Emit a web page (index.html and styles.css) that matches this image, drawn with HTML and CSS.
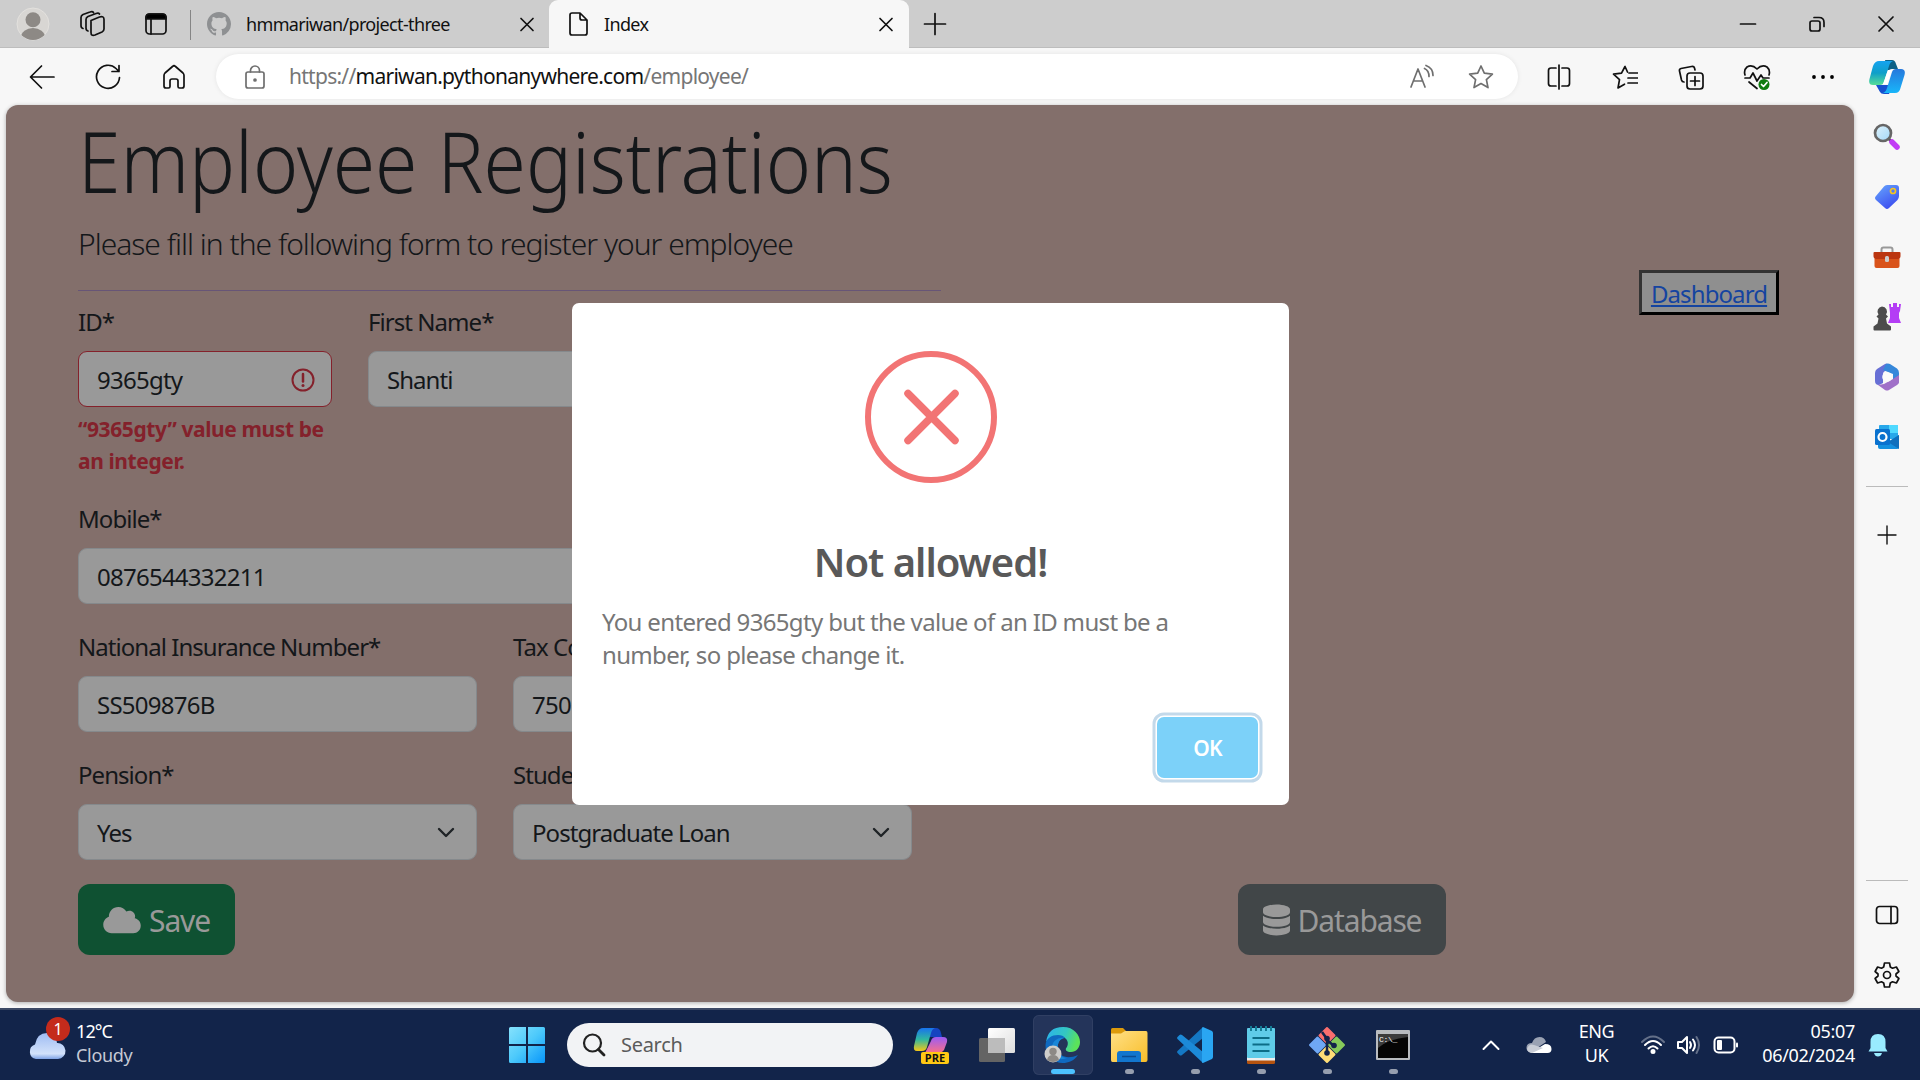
FILE: index.html
```html
<!DOCTYPE html>
<html lang="en">
<head>
<meta charset="utf-8">
<title>Index</title>
<link rel="stylesheet" href="styles.css">
</head>
<body>
<div class="desktop">

  <header class="tabstrip">
    <div class="cell avatar">
      <svg width="34" height="34" viewBox="0 0 34 34"><defs><clipPath id="av"><circle cx="17" cy="17" r="16"/></clipPath></defs><circle cx="17" cy="17" r="16" fill="#d8d6d3" stroke="#e3e1de"/><g clip-path="url(#av)" fill="#8d8985"><circle cx="17" cy="12.8" r="7.5"/><ellipse cx="17" cy="30" rx="12" ry="9"/></g></svg>
    </div>
    <div class="cell workspaces">
      <svg class="line" width="28" height="28" viewBox="0 0 28 28"><path d="M12 10.5l8.5-3.5q4.5-1.5 4.5 2.5v9.5q0 2-2 3l-7 3q-4 1.5-4-2.5z"/><path d="M9 21q-2-.5-2-3V9.500q0-2 2-3l8-3q2.5-1 3.5.5M4 18.5q-2-.5-2-3V7.500q0-2 2-3l7-2.5q2.5-1 3.5.5"/></svg>
    </div>
    <div class="cell tabmenu">
      <svg class="line" width="24" height="24" viewBox="0 0 24 24"><rect x="2" y="2" width="20" height="20" rx="3.5"/><path d="M2 7V5.500Q2 2 5.500 2h13Q22 2 22 5.500V7z" fill="#000"/><path d="M7 7v15"/></svg>
    </div>
    <i class="divider"></i>
    <div class="tab idle">
      <svg width="24" height="24" viewBox="0 0 16 16"><path fill="#8e9092" d="M8 0C3.58 0 0 3.58 0 8c0 3.54 2.29 6.53 5.47 7.59.4.07.55-.17.55-.38v-1.49c-2.01.37-2.53-.49-2.69-.94-.09-.23-.48-.94-.82-1.13-.28-.15-.68-.52-.01-.53.63-.01 1.08.58 1.23.82.72 1.21 1.87.87 2.33.66.07-.52.28-.87.51-1.07-1.78-.2-3.64-.89-3.64-3.95 0-.87.31-1.59.82-2.15-.08-.2-.36-1.02.08-2.12 0 0 .67-.21 2.2.82a7.6 7.6 0 0 1 4 0c1.53-1.04 2.2-.82 2.2-.82.44 1.1.16 1.92.08 2.12.51.56.82 1.27.82 2.15 0 3.07-1.87 3.75-3.65 3.95.29.25.54.73.54 1.48v2.2c0 .21.15.46.55.38A8 8 0 0 0 16 8c0-4.42-3.58-8-8-8z"/></svg>
      <span class="tab-title">hmmariwan/project-three</span>
      <svg class="line close" width="24" height="24" viewBox="0 0 24 24"><path d="M6 6.500l12 12M18 6.500l-12 12"/></svg>
    </div>
    <div class="tab active">
      <svg class="line" width="24" height="26" viewBox="0 0 24 26"><path d="M6 2h8l7 7v13q0 2-2 2H6q-2 0-2-2V4q0-2 2-2zM14 2v5q0 2 2 2h5"/></svg>
      <span class="tab-title">Index</span>
      <svg class="line close" width="24" height="24" viewBox="0 0 24 24"><path d="M6 6.500l12 12M18 6.500l-12 12"/></svg>
    </div>
    <div class="cell newtab"><svg class="line" width="24" height="24" viewBox="0 0 24 24"><path d="M12 1.5v21M1.500 12h21"/></svg></div>
    <div class="window-controls">
      <div class="cell"><svg class="line" width="20" height="20" viewBox="0 0 20 20"><path d="M2.500 10h15"/></svg></div>
      <div class="cell"><svg class="line" width="20" height="20" viewBox="0 0 20 20"><rect x="3" y="7" width="10" height="10" rx="2"/><path d="M7 3.500h5q5 0 5 5v4"/></svg></div>
      <div class="cell"><svg class="line" width="20" height="20" viewBox="0 0 20 20"><path d="M3 3l14 14M17 3l-14 14"/></svg></div>
    </div>
  </header>

  <div class="toolbar">
    <div class="cell"><svg class="line" width="26" height="26" viewBox="0 0 26 26"><path d="M25 13H2M12.500 2L1.500 13l11 11"/></svg></div>
    <div class="cell"><svg class="line" width="26" height="26" viewBox="0 0 26 26"><path d="M24.500 13.500A11.500 11.500 0 1 1 21 4.500l3 3M24 1.500v6h-7"/></svg></div>
    <div class="cell"><svg class="line" width="24" height="26" viewBox="0 0 24 26"><path d="M2 11.500q0-1.500 1-2.500L10.500 2.500q1.500-1.500 3 0L21 9q1 1 1 2.500V22q0 2-2 2h-2.500q-1.500 0-1.500-1.500V17q0-2-2-2h-4q-2 0-2 2v5.500q0 1.500-1.500 1.500H4q-2 0-2-2z"/></svg></div>
    <div class="address">
      <svg class="line gray" width="24" height="26" viewBox="0 0 24 26"><rect x="3" y="8" width="18" height="16" rx="2"/><path d="M7.500 8V6.500a4.500 4.500 0 0 1 9 0V8"/><circle cx="12" cy="16" r="1" fill="#6b6b6b"/></svg>
      <span class="url">https://<b>mariwan.pythonanywhere.com</b>/employee/</span>
      <svg class="line gray read" width="26" height="26" viewBox="0 0 26 26"><path d="M2 23L9 5l7 18M4.500 17h9M15.500 4.500q4.500 2 4.500 8M17 1.500q7 2.500 7 10"/></svg>
      <svg class="line gray" width="26" height="26" viewBox="0 0 26 26"><path d="M13 2l3.300 7.200 8.100.9-6 5.500 1.600 8-7-4-7 4 1.600-8-6-5.500 8.100-.9z"/></svg>
    </div>
    <div class="cell first"><svg class="line" width="26" height="26" viewBox="0 0 26 26"><path d="M10 4H5Q2.500 4 2.500 6.500v13Q2.500 22 5 22h5M16 4h5q2.500 0 2.500 2.500v13q0 2.500-2.500 2.500h-5M13 1v24"/></svg></div>
    <div class="cell"><svg class="line" width="26" height="26" viewBox="0 0 26 26"><path d="M15.500 8L13 2.500 9.500 9.200l-8 1 6 5.500-1.500 8.300 6.500-3.800M17 9h8.500M16 14h9.500M16 19h9.500"/></svg></div>
    <div class="cell"><svg class="line" width="26" height="26" viewBox="0 0 26 26"><rect x="9" y="9" width="16" height="16" rx="3"/><path d="M17 12.500v9M12.500 17h9M17 6l-.5-2q-.5-2-3-1.500L3 4.500Q1 5 1.500 7l2 9q.5 2 2.500 2"/></svg></div>
    <div class="cell"><svg class="line" width="28" height="26" viewBox="0 0 28 26"><path d="M2 11q-1.500-5 2-8Q9 0 14 5q5-5 10-2 3.500 3 2 8M2 14h5l3-5 4 8 4-6 2 3h6M6 18l8 6.500"/><circle cx="21" cy="20.500" r="5.500" fill="#107c10" stroke="none"/><path d="M18.500 20.500l2 2 3.500-4" stroke="#fff"/></svg></div>
    <div class="cell"><svg width="26" height="26" viewBox="0 0 26 26"><circle cx="4" cy="13" r="1.900"/><circle cx="13" cy="13" r="1.900"/><circle cx="22" cy="13" r="1.900"/></svg></div>
    <div class="cell copilot"><svg width="36" height="34" viewBox="0 0 36 34"><defs><linearGradient id="c1" x1="0" y1="0" x2="0" y2="1"><stop offset="0" stop-color="#16a3f0"/><stop offset=".5" stop-color="#0e9fc9"/><stop offset="1" stop-color="#56dd97"/></linearGradient><linearGradient id="c2" x1="0" y1="0" x2="0" y2="1"><stop offset="0" stop-color="#2678dc"/><stop offset="1" stop-color="#18b6fa"/></linearGradient></defs><path d="M16 0h7q3 0 4 4l2 5h-6q-3 0-4 3z" fill="#0d6187"/><path d="M7 25l4 7q1 2 4 2h5l4-9z" fill="#1550cf"/><path d="M10 1h14q-3 1-4 5l-5 16q-1 3-4 3H4q-5 0-3.500-6L4 6Q6 1 10 1z" fill="url(#c1)"/><path d="M26 33H14q3-1 4-5l5-16q1-3 4-3h5q5 0 3.500 6l-4 13q-1 5-5.500 5z" fill="url(#c2)"/><path d="M19 10h4l-5 14h-4z" fill="#fff"/></svg></div>
  </div>

  <div class="middle">
    <main class="page">
      <h1>Employee Registrations</h1>
      <p class="lead">Please fill in the following form to register your employee</p>
      <hr>
      <div class="columns">
        <form class="form">
          <div class="row names">
            <div class="field">
              <label>ID*</label>
              <div class="input invalid"><span class="digits">9365gty</span><svg width="24" height="24" viewBox="0 0 24 24"><circle cx="12" cy="12" r="10.500" fill="none" stroke="#84212b" stroke-width="2"/><path d="M12 6v7.500" stroke="#84212b" stroke-width="2.500" stroke-linecap="round"/><circle cx="12" cy="17.500" r="1.500" fill="#84212b"/></svg></div>
              <p class="error">“9365gty” value must be<br>an integer.</p>
            </div>
            <div class="field"><label>First Name*</label><div class="input">Shanti</div></div>
          </div>
          <div class="row"><div class="field wide"><label>Mobile*</label><div class="input"><span class="digits">0876544332211</span></div></div></div>
          <div class="row halves">
            <div class="field"><label>National Insurance Number*</label><div class="input"><span class="digits">SS509876B</span></div></div>
            <div class="field"><label>Tax Code*</label><div class="input"><span class="digits">750L</span></div></div>
          </div>
          <div class="row halves">
            <div class="field"><label>Pension*</label><div class="input">Yes<svg class="caret" width="18" height="18" viewBox="0 0 18 18"><path d="M2 5l7 7 7-7"/></svg></div></div>
            <div class="field"><label>Student Loan*</label><div class="input">Postgraduate Loan<svg class="caret" width="18" height="18" viewBox="0 0 18 18"><path d="M2 5l7 7 7-7"/></svg></div></div>
          </div>
        </form>
        <aside class="side"><button class="dashboard" type="button"><a href="#">Dashboard</a></button></aside>
      </div>
      <div class="actions">
        <div class="btn save"><svg width="38" height="30" viewBox="0 0 640 512"><path fill="#999" d="M0 336c0 79.500 64.500 144 144 144h368c70.700 0 128-57.300 128-128 0-61.900-44-113.600-102.400-125.400 4.100-10.700 6.400-22.400 6.400-34.600 0-53-43-96-96-96-19.700 0-38.100 6-53.300 16.200C367 64.200 315.300 32 256 32 167.600 32 96 103.600 96 192c0 2.700.1 5.400.2 8.100C40.200 219.800 0 273.200 0 336z"/></svg><span>Save</span></div>
        <div class="btn database"><svg width="27" height="32" viewBox="0 0 448 512"><path fill="#999" d="M448 80v48c0 44.200-100.300 80-224 80S0 172.200 0 128V80C0 35.800 100.300 0 224 0s224 35.800 224 80zM393.200 214.700c20.800-7.400 39.900-16.900 54.800-28.600V288c0 44.200-100.300 80-224 80S0 332.200 0 288V186.100c14.900 11.800 34 21.200 54.800 28.600C99.700 230.700 159.500 240 224 240s124.300-9.300 169.200-25.300zM0 346.100c14.900 11.800 34 21.200 54.800 28.600C99.700 390.700 159.500 400 224 400s124.300-9.300 169.200-25.300c20.800-7.400 39.900-16.900 54.800-28.600V432c0 44.200-100.300 80-224 80S0 476.200 0 432z"/></svg><span>Database</span></div>
      </div>
      <section class="modal">
        <svg class="modal-icon" width="132" height="132" viewBox="0 0 132 132"><circle cx="66" cy="66" r="63"/><path d="M43 42.500l47 47M90 42.500l-47 47"/></svg>
        <h2>Not allowed!</h2>
        <p>You entered 9365gty but the value of an ID must be a<br>number, so please change it.</p>
        <button class="ok" type="button">OK</button>
      </section>
    </main>

    <nav class="sidebar">
      <div class="cell"><svg width="28" height="28" viewBox="0 0 28 28"><defs><linearGradient id="mg" x2="1" y2="1"><stop offset="0" stop-color="#dff2fb"/><stop offset="1" stop-color="#a3d8f7"/></linearGradient></defs><path d="M16 16l4 4" stroke="#555" stroke-width="3"/><path d="M19 19l5 5" stroke="#c13cf5" stroke-width="5.500" stroke-linecap="round"/><circle cx="10" cy="10" r="8" fill="url(#mg)" stroke="#666" stroke-width="2.700"/></svg></div>
      <div class="cell"><svg width="26" height="26" viewBox="0 0 26 26"><defs><linearGradient id="tg" x2=".6" y2="1"><stop offset="0" stop-color="#67a7fd"/><stop offset="1" stop-color="#3d4ff0"/></linearGradient></defs><path d="M13 1h9q3 0 3 3v8q0 2-1.500 4L15 24q-2 2-4 0l-9-8q-2-2 0-4L10 2.500Q11 1 13 1z" fill="url(#tg)"/><circle cx="19" cy="7" r="2.500" fill="none" stroke="#f7c51e" stroke-width="1.700"/></svg></div>
      <div class="cell"><svg width="28" height="24" viewBox="0 0 28 24"><path d="M8.500 7V4.500q0-2 2-2h7q2 0 2 2V7" fill="none" stroke="#999" stroke-width="2"/><rect x="1.500" y="12" width="25" height="11" rx="2" fill="#d9531b"/><path d="M.5 8q0-1 1-1h25q1 0 1 1v3q0 3-3 3h-21q-3 0-3-3z" fill="#bb3610"/><rect x="12" y="11" width="4" height="6" rx="1.500" fill="#ccc"/></svg></div>
      <div class="cell"><svg width="28" height="28" viewBox="0 0 28 28"><path d="M16 1h2v3h2V0h4v4h2V1h2l-1 7-1 2v5l2 5H15l2-5v-5z" fill="#b43df5"/><path d="M9 3.500a5 5 0 0 1 4 8l2 2-2 2 1 5 4 3v3q0 1-1 1H1.500q-1 0-1-1v-3l4-3 1-5-2-2 2-2a5 5 0 0 1 3.500-8z" fill="#4c4c4c"/></svg></div>
      <div class="cell"><svg width="26" height="28" viewBox="0 0 26 28"><path d="M11 1L3 6Q1 7.500 1 10v8q0 4 4 4l4-2V11q0-2 2-3l7-4-4-3q-1.500-1-3 0z" fill="#676fd5"/><path d="M12 1q2-1 4 0l7 4.500Q25 7 25 10v10l-6-4v-5L9 7z" fill="#3688da"/><path d="M25 12v7q0 2-2 3l-8 5q-2 1-4 0l-7-5 6-1 9-5z" fill="#a070c8"/><circle cx="13" cy="14" r="4.800" fill="#fafafa"/></svg></div>
      <div class="cell"><svg width="26" height="26" viewBox="0 0 26 26"><rect x="5" y="1" width="19" height="14" rx="1" fill="#28a8ea"/><rect x="15" y="1" width="9" height="8" fill="#50d9ff"/><path d="M4 12l10 6 11-7v12q0 2-2 2H6q-2 0-2-2z" fill="#1490df"/><path d="M25 11v14L14 18z" fill="#0f6fbd"/><rect x="1" y="5" width="15" height="16" rx="1.500" fill="#0a72cf"/><circle cx="8.500" cy="13" r="4" fill="none" stroke="#fff" stroke-width="2.200"/></svg></div>
      <i class="rule"></i>
      <div class="cell add"><svg class="line thin" width="20" height="20" viewBox="0 0 20 20"><path d="M10 1v18M1 10h18"/></svg></div>
      <i class="rule bottom"></i>
      <div class="cell"><svg class="line" width="24" height="22" viewBox="0 0 24 22"><rect x="1.500" y="2.500" width="21" height="17" rx="3"/><path d="M16 2.500v17"/></svg></div>
      <div class="cell"><svg class="line" width="28" height="28" viewBox="0 0 28 28"><path d="M11.500 2h5l.8 4 2.200 1.200L23.400 6l2.500 4.500L23 13v2l2.900 2.500L23.400 22l-3.900-1.200-2.200 1.200-.8 4h-5l-.8-4-2.200-1.200L4.600 22l-2.500-4.500L5 15v-2l-2.900-2.500L4.600 6l3.900 1.200L10.700 6z"/><circle cx="14" cy="14" r="3.500"/></svg></div>
    </nav>
  </div>

  <footer class="taskbar">
    <div class="weather">
      <div class="weather-icon"><svg width="38" height="28" viewBox="0 0 38 28"><defs><linearGradient id="wc" x2="0" y2="1"><stop offset="0" stop-color="#9ebcf3"/><stop offset=".8" stop-color="#d3e2fa"/><stop offset="1" stop-color="#7fa3e5"/></linearGradient></defs><path d="M8 27a7.500 7.500 0 0 1-1-14.500Q9 1 19 1q9 0 10 10a8 8 0 0 1 1 16z" fill="url(#wc)"/></svg><span class="badge">1</span></div>
      <div class="weather-text"><span>12°C</span><span class="sub">Cloudy</span></div>
    </div>
    <div class="start"><svg width="36" height="36" viewBox="0 0 36 36"><defs><linearGradient id="wg" gradientUnits="userSpaceOnUse" x1="0" y1="0" x2="36" y2="36"><stop offset="0" stop-color="#86e2fd"/><stop offset=".5" stop-color="#4cc9fb"/><stop offset="1" stop-color="#0795fa"/></linearGradient></defs><path d="M0 1.500Q0 0 1.500 0H17v17H0zM19 0h15.500Q36 0 36 1.500V17H19zM0 19h17v17H1.500Q0 36 0 34.500zM19 19h17v15.500q0 1.500-1.500 1.500H19z" fill="url(#wg)"/></svg></div>
    <div class="search"><svg width="24" height="26" viewBox="0 0 24 26" fill="none" stroke="#222"><circle cx="10.500" cy="11" r="8.500" stroke-width="2.200"/><path d="M16.500 17.500l5.500 5.500" stroke-width="2.800" stroke-linecap="round"/></svg><span>Search</span></div>
    <div class="apps">
      <div class="app"><svg width="36" height="38" viewBox="0 0 36 38"><defs><linearGradient id="p1" x2="0" y2="1"><stop offset="0" stop-color="#1872ee"/><stop offset=".5" stop-color="#30b8a0"/><stop offset="1" stop-color="#f7c716"/></linearGradient><linearGradient id="p2" x2="0" y2="1"><stop offset="0" stop-color="#9b5cf5"/><stop offset="1" stop-color="#fb7185"/></linearGradient></defs><path d="M15 2h8q4 0 5 5l1 4H17z" fill="#1544c0"/><path d="M10 2h12q-3 1-4 5l-4 14q-1 4-5 4H4q-4 0-3-5L4 7q2-5 6-5z" fill="url(#p1)"/><path d="M24 27H12l6-12q1-4 5-4h7q5 0 4 5l-3 8q-2 3-7 3z" fill="url(#p2)"/><rect x="8" y="26" width="28" height="12" rx="2" fill="#ffc814"/><text x="22" y="36" text-anchor="middle" class="pre">PRE</text></svg></div>
      <div class="app"><svg width="38" height="38" viewBox="0 0 38 38"><defs><linearGradient id="tv" x2="1" y2="1"><stop offset="0" stop-color="#fff"/><stop offset="1" stop-color="#ddd"/></linearGradient></defs><rect x="1" y="12" width="26" height="24" rx="1.500" fill="#646464"/><rect x="10" y="2" width="27" height="25" rx="1.500" fill="url(#tv)"/><rect x="10" y="12" width="17" height="15" fill="#bcbcbc"/></svg></div>
      <div class="app current"><svg width="38" height="38" viewBox="0 0 38 38"><defs><linearGradient id="e1" x2="1" y2=".3"><stop offset="0" stop-color="#2ab0f0"/><stop offset=".6" stop-color="#34c7c0"/><stop offset="1" stop-color="#5be35a"/></linearGradient></defs><path d="M2 16Q4 1 19 1c11 0 17 8 17 15 0 6-4 10-9 10-4 0-7-2-4-5 3-6-2-11-8-11-5 0-10 2-13 6z" fill="url(#e1)"/><path d="M1.500 19C2 12 8 9 14 9c3 0 6 1 7 3-5 0-8 5-7 11 1 7 9 11 20 6-4 6-10 8-15 8C9 37 1 29 1.500 19z" fill="#0f69c0"/><path d="M8 24c-1-8 5-13 13-12-5 0-8 5-7 11 0 5 4 9 9 9-7 3-14 0-15-8z" fill="#1986d8"/><circle cx="9" cy="28" r="8.500" fill="#cfcdca"/><circle cx="9" cy="25.500" r="3.700" fill="#8d8985"/><path d="M3 34q1-5 6-5t6 5q-6 4-12 0z" fill="#8d8985"/></svg></div>
      <div class="app running"><svg width="38" height="36" viewBox="0 0 38 36"><defs><linearGradient id="fg" x2="1" y2="1"><stop offset="0" stop-color="#ffe086"/><stop offset="1" stop-color="#f8bd29"/></linearGradient></defs><path d="M1 9V2.500Q1 1 2.500 1H13l4 4v5z" fill="#dc9a0c"/><path d="M1 6.500h10L15 4h21q1.500 0 1.500 2v27q0 2-2 2h-33Q1 35 1 33z" fill="url(#fg)"/><path d="M7 35V27q0-3 3-3h18q3 0 3 3v8z" fill="#1276ce"/><path d="M12 29.500h14" stroke="#0b4c92" stroke-width="1.500"/></svg></div>
      <div class="app running"><svg width="38" height="38" viewBox="0 0 38 38"><path d="M27 1L1.500 25q-1 1 0 2l2 2q1 1 2.500 0L27 12z" fill="#1478c4"/><path d="M27 37L1.500 13q-1-1 0-2l2-2q1-1 2.500 0L27 26z" fill="#1c8ad8"/><path d="M27 1l9 4q1 1 1 2v24q0 1-1 2l-9 4q-1 0-1-1V2z" fill="#2aa6f2"/></svg></div>
      <div class="app running"><svg width="30" height="38" viewBox="0 0 30 38"><rect x="1" y="31" width="28" height="7" rx="1.500" fill="#b5530f"/><rect x="1" y="29" width="28" height="5.500" fill="#eee"/><rect x="1" y="2" width="28" height="30" rx="1" fill="#5fcbe8"/><path d="M5 0v5M10 0v5M15 0v5M20 0v5M25 0v5" stroke="#147a94" stroke-width="2"/><path d="M6.500 12h17M6.500 18.500h17M6.500 25h17" stroke="#0c6c86" stroke-width="2.200"/></svg></div>
      <div class="app running"><svg width="38" height="38" viewBox="0 0 38 38"><g stroke-width="2" stroke-linejoin="round"><path d="M19 2l7.500 7.500L19 17l-7.500-7.500z" fill="#fa6e6e" stroke="#fa6e6e"/><path d="M28.500 11.500L36 19l-7.500 7.500L21 19z" fill="#86c95a" stroke="#86c95a"/><path d="M9.500 11.500L17 19l-7.500 7.500L2 19z" fill="#6fa8f5" stroke="#6fa8f5"/><path d="M19 21l7.500 7.500L19 36l-7.500-7.500z" fill="#ffdd77" stroke="#ffdd77"/></g><path d="M14 6l5 7v15M19 14l7 6" stroke="#13234a" stroke-width="2.500" fill="none"/><g fill="#13234a"><circle cx="19" cy="12.500" r="2.800"/><circle cx="19" cy="27" r="2.800"/><circle cx="26" cy="19.500" r="2.800"/></g></svg></div>
      <div class="app running"><svg width="34" height="30" viewBox="0 0 34 30"><rect width="34" height="30" rx="1" fill="#b9bcc0"/><rect x="2" y="4" width="30" height="24" fill="#050505"/><path d="M2 4h30v3Q12 9 2 18z" fill="#3c3c3c"/><text x="3" y="12" class="prompt">C:\_</text></svg></div>
    </div>
    <div class="tray">
      <svg class="wline chev" width="20" height="14" viewBox="0 0 20 14"><path d="M2.500 11L10 3.500l7.500 7.500"/></svg>
      <svg class="cloud" width="26" height="18" viewBox="0 0 26 18"><path d="M5 16q-5 0-4.500-5Q1 7 6 7q2-6 7.500-6 5 0 6.500 5z" fill="#9aa2b3"/><path d="M4 17l15-9q6.500 0 6.500 5 0 4-4 4z" fill="#fff"/><path d="M1 13q2-6 7-4l9 3-11 5q-4 0-5-4z" fill="#c9cdd6"/></svg>
      <div class="lang"><span>ENG</span><span>UK</span></div>
      <svg class="wline wifi" width="24" height="20" viewBox="0 0 24 20"><path d="M1 7q11-11 22 0" opacity=".35"/><path d="M4 10q8-8 16 0M7.500 13.500q4.500-4.500 9 0"/><circle cx="12" cy="16.500" r="1.500" fill="#fff"/></svg>
      <svg class="wline vol" width="24" height="22" viewBox="0 0 24 22"><path d="M1 8v6h4l5 5V3L5 8zM13 8q2 3 0 6M16 5.500q4 5.500 0 11"/><path d="M19.500 3q5 8 0 16" opacity=".35"/></svg>
      <svg class="wline" width="26" height="18" viewBox="0 0 26 18"><rect x="1.500" y="1.500" width="20" height="15" rx="4"/><rect x="4" y="4" width="5" height="10" rx="1" fill="#fff" stroke="none"/><path d="M24 7.500v3"/></svg>
      <div class="clock"><span>05:07</span><span>06/02/2024</span></div>
      <svg class="bell" width="20" height="24" viewBox="0 0 20 24"><path d="M10 1q7.500 0 7.500 8v6l2 3.500H.5l2-3.500V9Q2.500 1 10 1zM6 20h8q-1 3.500-4 3.500T6 20z" fill="#99ebff"/></svg>
    </div>
  </footer>
</div>
</body>
</html>
```
FILE: styles.css
```css
* { box-sizing: border-box; }
body { margin: 0; width: 1920px; height: 1080px; overflow: hidden; font-family: "Noto Sans", "Open Sans", sans-serif; color: #14171a; }
h1, h2, p { margin: 0; font-weight: 400; }
svg { display: block; flex: none; }
.desktop { display: flex; flex-direction: column; width: 1920px; height: 1080px; background: #f7f7f7; }
.cell { display: flex; align-items: center; justify-content: center; flex: none; }
.line { fill: none; stroke: #111; stroke-width: 1.7; stroke-linejoin: round; stroke-linecap: round; }
.thin { stroke-width: 1.4; }
.gray { stroke: #6f6f6f; }

.tabstrip { display: flex; height: 48px; background: #cdcdcd; box-shadow: inset 0 -1px 0 #bdbdbd; }
.avatar { width: 60px; margin-left: 3px; }
.workspaces { width: 60px; }
.tabmenu { width: 66px; }
.divider { width: 1px; height: 30px; margin: 10px 1px 0; background: #858585; }
.tab { display: flex; align-items: center; height: 48px; }
.idle { width: 357px; padding: 0 10px 0 15px; gap: 15px; }
.active { width: 360px; padding: 0 11px 0 17px; gap: 14px; background: #f7f7f7; border-radius: 9px 9px 0 0; }
.tab-title { font-size: 18px; letter-spacing: -0.65px; color: #111; }
.close { margin-left: auto; }
.newtab { width: 52px; }
.window-controls { display: flex; margin-left: auto; }
.window-controls .cell { width: 69px; }

.toolbar { display: flex; height: 57px; padding: 0 0 0 9px; }
.toolbar .cell { width: 66px; height: 57px; }
.address { display: flex; align-items: center; width: 1302px; height: 45px; margin: 6px 0 0 9px; padding: 0 24px 0 27px; background: #fff; border-radius: 23px; box-shadow: 0 0 5px rgba(0, 0, 0, .08); flex: none; }
.url { margin: -1px 0 0 22px; font-size: 21px; letter-spacing: -0.73px; color: #767676; }
.url b { font-weight: 400; color: #111; }
.read { margin: 0 33px 0 auto; }
.toolbar .first { margin-left: 8px; }
.toolbar .copilot { margin-left: -2px; }

.middle { display: flex; height: 903px; }
.page { position: relative; width: 1848px; height: 897px; margin-left: 6px; padding: 5px 0 0 72px; border-radius: 12px; background: #836f6b; box-shadow: 0 1px 4px rgba(0, 0, 0, .3); }
h1 { height: 111px; font-size: 84px; line-height: 101px; font-weight: 300; white-space: nowrap; transform: scaleX(.914); transform-origin: 0 0; }
.lead { height: 69px; font-size: 30px; line-height: 45px; font-weight: 300; letter-spacing: -1px; white-space: nowrap; }
hr { width: 863px; height: 1px; margin: 0; border: 0; background: #675577; }
.columns { display: flex; height: 593px; }
.form { width: 834px; padding-top: 13px; }
.row { display: flex; gap: 36px; height: 128px; font-size: 24px; line-height: 36px; letter-spacing: -0.95px; white-space: nowrap; }
.names { height: 197px; }
.names .field { width: 254px; }
.halves .field { width: 399px; }
.wide { width: 834px; }
label { display: block; }
.input { display: flex; align-items: center; justify-content: space-between; height: 56px; margin-top: 11px; padding: 1px 18px 0; border: 1px solid #85898c; border-radius: 9px; background: #999; }
.digits { letter-spacing: -0.75px; }
.invalid { border-color: #84212b; padding-right: 16px; }
.error { margin-top: 6px; font-size: 21px; line-height: 32px; font-weight: 700; letter-spacing: -0.4px; color: #84212b; }
.caret { margin-right: 3px; fill: none; stroke: #1f2326; stroke-width: 2.4; stroke-linecap: round; stroke-linejoin: round; }
.side { display: flex; flex: 1; justify-content: flex-end; align-items: flex-start; padding-right: 75px; }
.dashboard { width: 140px; height: 45px; margin-top: -21px; padding: 2px 0 0; border: 3px solid; border-color: #333 #000 #000 #333; background: #8f8f8f; font: 24px/34px "Noto Sans", sans-serif; letter-spacing: -0.9px; }
.dashboard a { color: #1544a0; }
.actions { display: flex; }
.btn { display: flex; align-items: center; justify-content: center; gap: 8px; height: 71px; padding-top: 1px; border-radius: 12px; font-size: 30px; letter-spacing: -1.15px; color: #999; }
.save { width: 157px; background: #0f5132; }
.database { width: 208px; margin-left: 1003px; background: #414648; }

.modal { position: absolute; left: 566px; top: 198px; width: 717px; height: 502px; padding: 48px 30px 0; border-radius: 7px; background: #fff; }
.modal-icon { margin: 0 auto; fill: none; stroke: #f27474; stroke-width: 6; }
.modal-icon path { stroke-width: 7.5; stroke-linecap: round; }
.modal h2 { margin-top: 52px; font-size: 40px; line-height: 54px; font-weight: 600; letter-spacing: -1px; text-align: center; color: #595959; }
.modal p { margin-top: 17px; font-size: 24px; line-height: 32.5px; letter-spacing: -0.66px; color: #767676; white-space: nowrap; }
.ok { display: block; margin: 46px 1px 0 auto; width: 101px; height: 61px; border: 0; border-radius: 7px; background: #7cd1f9; box-shadow: 0 0 0 1.5px #fff, 0 0 0 4.5px #c3d9ea; font: 600 21px "Noto Sans", sans-serif; letter-spacing: -0.8px; color: #fff; }

.sidebar { display: flex; flex-direction: column; width: 66px; padding-top: 2px; }
.sidebar .cell { height: 60px; }
.rule { display: block; width: 42px; height: 1px; margin: 19px 0 18px 12px; background: #bbb; }
.bottom { margin: auto 0 4px 12px; }
.sidebar .cell:last-child { margin-bottom: 3px; }

.taskbar { display: flex; align-items: center; height: 72px; padding-bottom: 1px; border-top: 2px solid #3c4965; background: #12244a; color: #fff; font-size: 18px; letter-spacing: -0.3px; }
.weather { display: flex; align-items: center; width: 509px; padding-left: 28px; }
.weather-icon { position: relative; width: 48px; height: 42px; padding-top: 8px; }
.badge { position: absolute; left: 18px; top: -7px; width: 24px; height: 24px; border-radius: 50%; background: #c42b1c; font-size: 16px; line-height: 24px; text-align: center; }
.weather-text, .lang, .clock { display: flex; flex-direction: column; line-height: 24px; margin-top: -3px; }
.weather-text span:first-child { letter-spacing: -0.9px; }
.sub { color: #c5cad5; }
.start { width: 58px; }
.search { display: flex; align-items: center; gap: 15px; width: 326px; height: 44px; padding-left: 15px; border-radius: 22px; background: #f2f3f5; color: #5b5b5b; font-size: 20px; }
.apps { display: flex; margin-left: 5px; }
.app { position: relative; display: flex; align-items: center; justify-content: center; width: 60px; height: 60px; margin-right: 6px; border-radius: 6px; }
.apps .app:first-child { margin-left: 3px; }
.current { background: #24345a; box-shadow: inset 0 0 0 1px #303f63; }
.current::after, .running::after { content: ""; position: absolute; bottom: 1px; width: 9px; height: 5px; border-radius: 3px; background: #969eae; }
.current::after { width: 24px; background: #4cc2ff; }
.pre { font: 700 11px "Open Sans", sans-serif; letter-spacing: 0; fill: #111; }
.prompt { font: 8px "Liberation Mono", monospace; fill: #fff; }
.tray { display: flex; align-items: center; margin-left: auto; padding-right: 32px; }
.wline { fill: none; stroke: #fff; stroke-width: 2; stroke-linecap: round; stroke-linejoin: round; }
.chev { margin-right: 25px; }
.cloud { margin-right: 27px; }
.lang { width: 35px; margin-right: 27px; align-items: center; white-space: nowrap; letter-spacing: -0.5px; }
.wifi { margin-right: 12px; }
.vol { margin-right: 12px; }
.clock { width: 116px; text-align: right; }
.bell { margin-left: 13px; }
```
